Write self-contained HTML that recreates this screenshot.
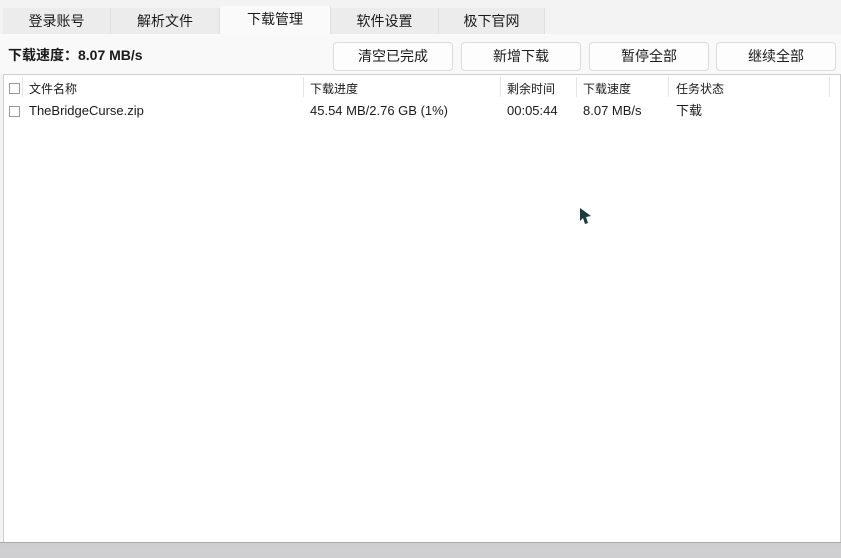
<!DOCTYPE html><html><head><meta charset="utf-8"><style>
body{margin:0;width:841px;height:558px;background:linear-gradient(#b9b8bb,#cfced1);font-family:"Liberation Sans","Noto Sans CJK SC",sans-serif;position:relative;overflow:hidden;color:#1a1a1a}
.win{position:absolute;left:0;top:0;width:841px;height:542px;background:#f3f3f3;border-bottom:1px solid #aaa}
.tab{position:absolute;top:8px;height:26px;font-size:14px;text-align:center;line-height:26px;background:#ececec;border-right:1px solid #e0e0e0}
.tab.a{background:#fafafa;top:6px;height:29px;line-height:26px}
.tool{position:absolute;left:0;top:34px;width:841px;height:40px;background:#f9f9f9}
.btn{position:absolute;top:42px;height:27px;width:118px;border:1px solid #dcdcdc;border-radius:4px;background:#fdfdfd;font-size:14px;text-align:center;line-height:27px}
.tbl{position:absolute;left:3px;top:74px;width:836px;height:467px;background:#fff;border:1px solid #cfcfcf;border-bottom:none}
.t{position:absolute;font-size:12px;white-space:nowrap;line-height:16px}
.cb{position:absolute;width:9px;height:9px;border:1px solid #999;background:#fff}
.sep{position:absolute;top:2px;width:1px;height:20px;background:#e6e6e6}
</style></head><body><div class="win">
<div class="tab" style="left:3px;width:107px">登录账号</div>
<div class="tab" style="left:111px;width:108px">解析文件</div>
<div class="tab a" style="left:220px;width:110px">下载管理</div>
<div class="tab" style="left:331px;width:107px">软件设置</div>
<div class="tab" style="left:439px;width:105px">极下官网</div>
<div class="tool"></div>
<div class="t" style="left:8px;top:47px;font-size:14px;font-weight:bold">下载速度：8.07 MB/s</div>
<div class="btn" style="left:333px">清空已完成</div>
<div class="btn" style="left:461px">新增下载</div>
<div class="btn" style="left:589px">暂停全部</div>
<div class="btn" style="left:716px">继续全部</div>
<div class="tbl">
<div class="sep" style="left:18px"></div><div class="sep" style="left:299px"></div><div class="sep" style="left:496px"></div><div class="sep" style="left:572px"></div><div class="sep" style="left:664px"></div><div class="sep" style="left:825px"></div>
<div class="cb" style="left:5px;top:8px"></div>
<div class="t" style="left:25px;top:6px">文件名称</div>
<div class="t" style="left:306px;top:6px">下载进度</div>
<div class="t" style="left:503px;top:6px">剩余时间</div>
<div class="t" style="left:579px;top:6px">下载速度</div>
<div class="t" style="left:672px;top:6px">任务状态</div>
<div class="cb" style="left:5px;top:31px"></div>
<div class="t" style="left:25px;top:28px;font-size:13px">TheBridgeCurse.zip</div>
<div class="t" style="left:306px;top:28px;font-size:13px">45.54 MB/2.76 GB (1%)</div>
<div class="t" style="left:503px;top:28px;font-size:13px">00:05:44</div>
<div class="t" style="left:579px;top:28px;font-size:13px">8.07 MB/s</div>
<div class="t" style="left:672px;top:28px;font-size:13px">下载</div>
</div>
<svg style="position:absolute;left:579px;top:207px" width="14" height="18"><path d="M1 1 L12 9 L7 10 L9 16 L6 17 L4 11 L1 14Z" fill="#1e3b3b"/></svg>
</div></body></html>
